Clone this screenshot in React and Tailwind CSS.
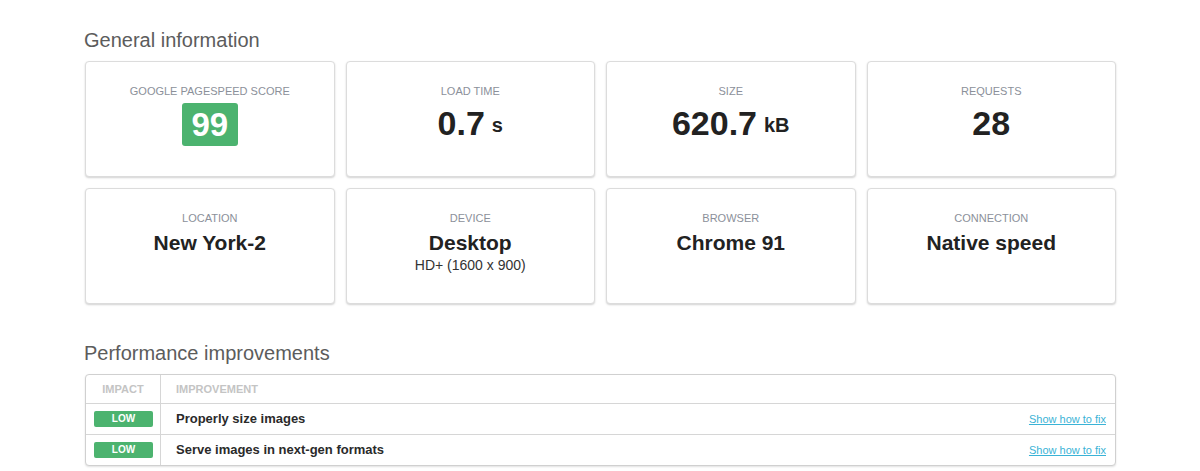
import React from "react";

const font = { fontFamily: '"Liberation Sans", Arial, Helvetica, sans-serif' };

function Card({ label, children }) {
  return (
    <div className="h-[116px] bg-white border border-[#dcdcdc] rounded-[4px] shadow-[0_1px_2px_rgba(0,0,0,0.18)] flex flex-col items-center pt-[22px]">
      <div className="h-[14px] leading-[14px] text-[11px] text-[#8b909a] uppercase">{label}</div>
      <div className="mt-[5px] flex flex-col items-center">{children}</div>
    </div>
  );
}

function BigValue({ value, unit }) {
  return (
    <div className="h-[43px] -mt-[2px] flex items-center text-[#222] font-bold">
      <span className="text-[34px] leading-[40px]">{value}</span>
      {unit && <span className="text-[20px] leading-[40px] ml-[7px] mt-[4px]">{unit}</span>}
    </div>
  );
}

function MidValue({ value, sub }) {
  return (
    <>
      <div className="text-[21px] leading-[26px] font-bold text-[#222]">{value}</div>
      {sub && <div className="text-[14px] leading-[18px] text-[#333]">{sub}</div>}
    </>
  );
}

function Row({ title }) {
  return (
    <div className="flex h-[31px] border-t border-[#d6d6d6]">
      <div className="w-[75px] border-r border-[#d6d6d6] flex items-center pl-[8px]">
        <span className="w-[59px] h-[16px] rounded-[2px] bg-[#4cb36f] text-white text-[10px] font-bold leading-[16px] text-center">
          LOW
        </span>
      </div>
      <div className="flex-1 flex items-center justify-between pl-[15px] pr-[9px]">
        <span className="text-[13px] font-bold text-[#2a2a2a]">{title}</span>
        <a href="#" className="text-[11px] text-[#3ab3d6] underline">Show how to fix</a>
      </div>
    </div>
  );
}

export default function App() {
  return (
    <div style={font} className="w-[1200px] h-[471px] bg-white overflow-hidden">
      <div className="ml-[85px] w-[1031px] pt-[28px]">
        <h2 className="h-[24px] leading-[24px] text-[20px] text-[#5c5c5c] ml-[-1px] mb-[9px]">General information</h2>
        <div className="grid grid-cols-4 gap-x-[11px] gap-y-[11px]">
          <Card label="Google Pagespeed Score">
            <div className="w-[56px] h-[43px] rounded-[3px] bg-[#4cb36f] text-white font-bold text-[33px] flex items-center justify-center">
              99
            </div>
          </Card>
          <Card label="Load time">
            <BigValue value="0.7" unit="s" />
          </Card>
          <Card label="Size">
            <BigValue value="620.7" unit="kB" />
          </Card>
          <Card label="Requests">
            <BigValue value="28" />
          </Card>
          <Card label="Location">
            <MidValue value="New York-2" />
          </Card>
          <Card label="Device">
            <MidValue value="Desktop" sub="HD+ (1600 x 900)" />
          </Card>
          <Card label="Browser">
            <MidValue value="Chrome 91" />
          </Card>
          <Card label="Connection">
            <MidValue value="Native speed" />
          </Card>
        </div>
        <h2 className="mt-[37px] h-[24px] leading-[24px] text-[20px] text-[#5c5c5c] ml-[-1px] mb-[9px]">Performance improvements</h2>
        <div className="border border-[#d0d0d0] rounded-[4px] shadow-[0_1px_2px_rgba(0,0,0,0.12)] bg-white">
          <div className="flex h-[28px]">
            <div className="w-[75px] border-r border-[#d6d6d6] flex items-center justify-center text-[11px] font-bold text-[#c4c4c4]">
              IMPACT
            </div>
            <div className="flex-1 flex items-center pl-[15px] text-[11px] font-bold text-[#c4c4c4]">IMPROVEMENT</div>
          </div>
          <Row title="Properly size images" />
          <Row title="Serve images in next-gen formats" />
        </div>
      </div>
    </div>
  );
}
